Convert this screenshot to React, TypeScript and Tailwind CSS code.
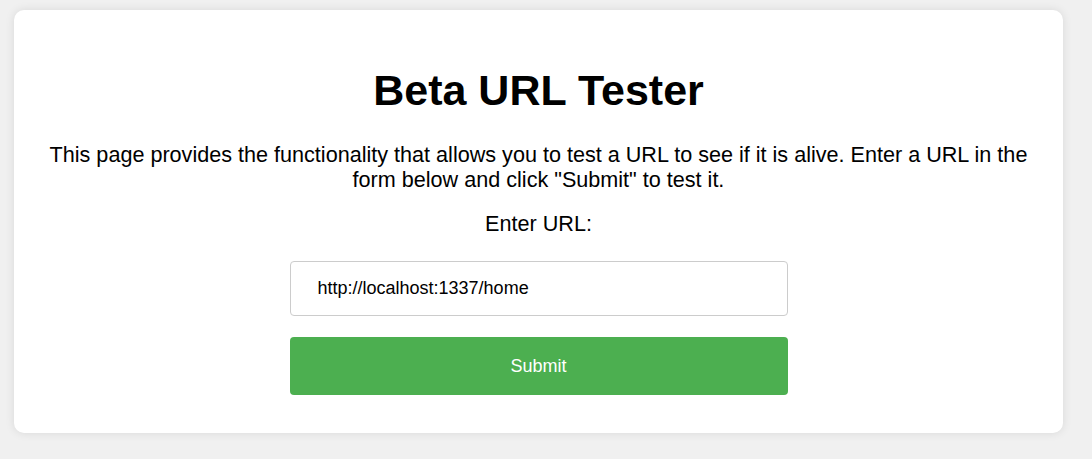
export default function App() {
  return (
    <div className="min-h-[459px] bg-[#f0f0f0] pt-[10px] pl-[14px]" style={{ fontFamily: '"Liberation Sans", Arial, sans-serif' }}>
      <div className="w-[1049px] h-[423px] bg-white rounded-[10px] shadow-[0_0_10px_rgba(0,0,0,0.1)] flex flex-col items-center pt-[55px] text-black">
        <h1 className="text-[43px] font-bold leading-[50px]">Beta URL Tester</h1>
        <p className="mt-[27px] px-[30px] text-center text-[21.6px] leading-[25px]">
          This page provides the functionality that allows you to test a URL to see if it is alive. Enter a URL in the form below and click "Submit" to test it.
        </p>
        <div className="mt-[19px] text-[21.6px] leading-[25px]">Enter URL:</div>
        <input
          type="text"
          defaultValue="http://localhost:1337/home"
          className="mt-[25px] w-[498px] h-[55px] border border-[#ccc] rounded-[4px] pl-[27px] text-[18px] text-black outline-none"
        />
        <button className="mt-[21px] w-[498px] h-[58px] bg-[#4caf50] rounded-[4px] text-white text-[18px]">
          Submit
        </button>
      </div>
    </div>
  );
}
